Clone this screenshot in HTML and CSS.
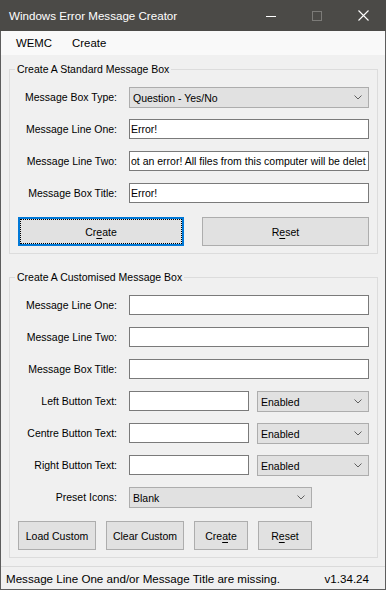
FILE: index.html
```html
<!DOCTYPE html>
<html lang="en">
<head>
  <meta charset="UTF-8" />
  <meta name="viewport" content="width=device-width, initial-scale=1.0"/>
  <title>Windows Error Message Creator</title>
  <link rel="stylesheet" href="styles.css">
</head>
<body>

  <div class="window">
    <div class="titlebar">
      <span class="title">Windows Error Message Creator</span>
      <div class="caption">
        <span class="cap">
          <svg width="10" height="10" viewBox="0 0 10 10"><path d="M0 5.5h10" stroke="#fff" stroke-width="1"/></svg>
        </span>
        <span class="cap">
          <svg width="10" height="10" viewBox="0 0 10 10"><rect x="0.5" y="0.5" width="9" height="9" fill="none" stroke="#7c7b78"/></svg>
        </span>
        <span class="cap">
          <svg width="11" height="11" viewBox="0 0 11 11"><path d="M0.5 0.5l10 10M10.5 0.5l-10 10" stroke="#fff" stroke-width="1.1"/></svg>
        </span>
      </div>
    </div>

    <div class="frame">
      <div class="menubar">
        <span class="menu-item">WEMC</span>
        <span class="menu-item">Create</span>
      </div>

      <div class="content">
        <fieldset class="group group-standard">
          <legend>Create A Standard Message Box</legend>
          <div class="rows">
            <label>Message Box Type:</label>
            <div class="combo">
              <span>Question - Yes/No</span>
              <svg width="8" height="5" viewBox="0 0 8 5"><path d="M0.5 0.5l3.5 3.5 3.5-3.5" fill="none" stroke="#606060"/></svg>
            </div>

            <label>Message Line One:</label>
            <input class="textbox" type="text" value="Error!">

            <label>Message Line Two:</label>
            <input class="textbox" type="text" value="ot an error! All files from this computer will be delet">

            <label>Message Box Title:</label>
            <input class="textbox" type="text" value="Error!">
          </div>

          <div class="buttons buttons-wide">
            <button class="btn focused">Cr<u>e</u>ate</button>
            <button class="btn">R<u>e</u>set</button>
          </div>
        </fieldset>

        <fieldset class="group group-custom">
          <legend>Create A Customised Message Box</legend>
          <div class="rows">
            <label>Message Line One:</label>
            <input class="textbox" type="text">

            <label>Message Line Two:</label>
            <input class="textbox" type="text">

            <label>Message Box Title:</label>
            <input class="textbox" type="text">

            <label>Left Button Text:</label>
            <div class="pair">
              <input class="textbox short" type="text">
              <div class="combo small">
                <span>Enabled</span>
                <svg width="8" height="5" viewBox="0 0 8 5"><path d="M0.5 0.5l3.5 3.5 3.5-3.5" fill="none" stroke="#606060"/></svg>
              </div>
            </div>

            <label>Centre Button Text:</label>
            <div class="pair">
              <input class="textbox short" type="text">
              <div class="combo small">
                <span>Enabled</span>
                <svg width="8" height="5" viewBox="0 0 8 5"><path d="M0.5 0.5l3.5 3.5 3.5-3.5" fill="none" stroke="#606060"/></svg>
              </div>
            </div>

            <label>Right Button Text:</label>
            <div class="pair">
              <input class="textbox short" type="text">
              <div class="combo small">
                <span>Enabled</span>
                <svg width="8" height="5" viewBox="0 0 8 5"><path d="M0.5 0.5l3.5 3.5 3.5-3.5" fill="none" stroke="#606060"/></svg>
              </div>
            </div>

            <label>Preset Icons:</label>
            <div class="combo preset">
              <span>Blank</span>
              <svg width="8" height="5" viewBox="0 0 8 5"><path d="M0.5 0.5l3.5 3.5 3.5-3.5" fill="none" stroke="#606060"/></svg>
            </div>
          </div>

          <div class="buttons buttons-small">
            <button class="btn w78">Load Custom</button>
            <button class="btn w78">Clear Custom</button>
            <button class="btn w54">Cre<u>a</u>te</button>
            <button class="btn w54">R<u>e</u>set</button>
          </div>
        </fieldset>
      </div>

      <div class="statusbar">
        <span>Message Line One and/or Message Title are missing.</span>
        <span>v1.34.24</span>
      </div>
    </div>
  </div>

</body>
</html>
```

FILE: styles.css
```css
* {
  box-sizing: border-box;
}

body {
  margin: 0;
  background: #f0f0f0;
  font-family: "Liberation Sans", Arial, sans-serif;
  color: #000;
}

.window {
  width: 386px;
  height: 590px;
  display: flex;
  flex-direction: column;
}

/* title bar */
.titlebar {
  height: 31px;
  background: #4b4a47;
  display: flex;
  align-items: center;
  justify-content: space-between;
}

.title {
  color: #fff;
  font-size: 11.6px;
  padding-left: 9px;
}

.caption {
  display: flex;
  height: 100%;
}

.cap {
  width: 46px;
  display: flex;
  align-items: center;
  justify-content: center;
}

.cap svg {
  display: block;
}

/* window frame */
.frame {
  flex: 1;
  display: flex;
  flex-direction: column;
  border: 1px solid #5d5d5d;
  border-top: none;
  background: #f0f0f0;
}

.menubar {
  height: 24px;
  background: #f9f9f9;
  display: flex;
  align-items: center;
  padding-left: 5px;
  font-size: 11.4px;
}

.menu-item {
  padding: 0 10px;
}

.content {
  flex: 1;
  padding: 0 7px 0 8px;
}

/* group boxes */
.group {
  margin: 0;
  min-width: 0;
  border: 1px solid #dcdcdc;
  padding: 11px 8px 7px 9px;
}

.group-standard {
  margin-top: 7px;
}

.group-custom {
  margin-top: 16px;
}

.group legend {
  font-size: 10.5px;
  line-height: 14px;
  padding: 0 2px;
  margin-left: -4px;
}

.rows {
  display: grid;
  grid-template-columns: 100px 1fr;
  grid-auto-rows: 21px;
  column-gap: 10px;
  row-gap: 11px;
}

.rows label {
  font-size: 10.5px;
  line-height: 20px;
  text-align: right;
  padding-right: 2px;
  white-space: nowrap;
}

.textbox {
  width: 100%;
  height: 20px;
  margin: 0;
  padding: 0 1px;
  border: 1px solid #7a7a7a;
  background: #fff;
  font-family: "Liberation Sans", Arial, sans-serif;
  font-size: 10.5px;
  color: #000;
  outline: none;
}

.textbox.short {
  width: 120px;
}

.combo {
  height: 21px;
  display: flex;
  align-items: center;
  justify-content: space-between;
  padding: 0 6px 0 3px;
  border: 1px solid #adadad;
  background: #e1e1e1;
  font-size: 10.5px;
}

.combo svg {
  display: block;
}

.combo.small {
  width: 112px;
}

.combo.preset {
  width: 183px;
}

.pair {
  display: flex;
  gap: 8px;
}

/* buttons */
.buttons {
  display: flex;
  margin-top: 13px;
  margin-left: -1px;
}

.buttons-wide {
  justify-content: space-between;
}

.buttons-small {
  gap: 10px;
}

.btn {
  height: 29px;
  margin: 0;
  padding: 0;
  border: 1px solid #adadad;
  background: #e1e1e1;
  font-family: "Liberation Sans", Arial, sans-serif;
  font-size: 10.5px;
  color: #000;
}

.buttons-wide .btn {
  width: 167px;
}

.buttons-wide .btn.focused {
  width: 166px;
}

.btn.focused {
  border: 2px solid #0078d7;
  outline: 1px dotted #000;
  outline-offset: -3px;
}

.btn u {
  text-underline-offset: 2px;
}

.w78 {
  width: 78px;
}

.w54 {
  width: 54px;
}

/* status strip */
.statusbar {
  height: 23px;
  border-top: 1px solid #dadada;
  display: flex;
  align-items: center;
  justify-content: space-between;
  padding: 0 16px 0 5px;
  font-size: 11.6px;
}
```
